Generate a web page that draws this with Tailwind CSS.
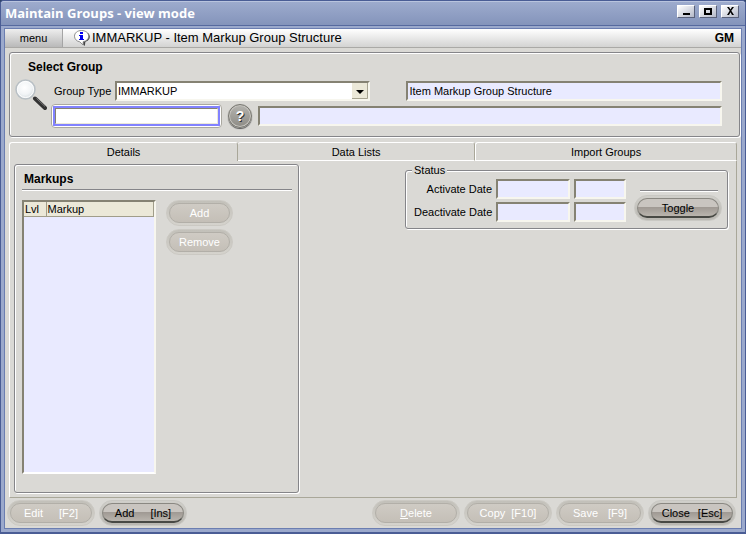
<!DOCTYPE html>
<html lang="en">

<head>
    <meta charset="UTF-8">
    <title>Maintain Groups - view mode</title>
    <meta name="viewport" content="width=device-width, initial-scale=1.0">
    <script src="https://cdn.jsdelivr.net/npm/@tailwindcss/browser@4"></script>
</head>

<body class="bg-[#2f4468] font-['Liberation_Sans',Arial,sans-serif] text-[11px] leading-[14px] text-black">
    <div class="min-h-screen flex flex-col rounded-t border border-b-2 border-[#4a5d95] bg-[#9ba9cc]">

        <!-- title bar -->
        <header class="flex items-center h-[25px] px-1 pb-0.5 rounded-t-[3px] border-t border-[#b9c4de] border-b border-b-[#566a9f] bg-linear-to-b from-[#9dabcd] to-[#8494bb]">
            <h1 class="flex-1 font-['Open_Sans',sans-serif] font-bold text-[13px] leading-4 text-white">Maintain Groups - view mode</h1>
            <div class="flex gap-1 pr-0.5 pb-0.5">
                <button aria-label="Minimize" class="w-[18px] h-[13px] border border-t-white border-l-white border-r-[#59617a] border-b-[#59617a] bg-linear-to-br from-white to-[#b4b9c9]">
                    <svg class="w-4 h-[11px]" viewBox="0 0 16 11"><path d="M5 7h7v2H5z" /></svg>
                </button>
                <button aria-label="Maximize" class="w-[18px] h-[13px] border border-t-white border-l-white border-r-[#59617a] border-b-[#59617a] bg-linear-to-br from-white to-[#b4b9c9]">
                    <svg class="w-4 h-[11px]" viewBox="0 0 16 11"><path fill-rule="evenodd" d="M4 2h8v7H4zM6 4v3h4V4z" /></svg>
                </button>
                <button aria-label="Close" class="w-[18px] h-[13px] border border-t-white border-l-white border-r-[#59617a] border-b-[#59617a] bg-linear-to-br from-white to-[#b4b9c9]">
                    <svg class="w-4 h-[11px]" viewBox="0 0 16 11"><path d="M5 1h2l1.500 2.500L10 1h2L9.300 4.800 12 9h-2L8.500 6.200 7 9H5l2.700-4.200z" /></svg>
                </button>
            </div>
        </header>

        <div class="flex-1 flex flex-col m-[3px] mt-0.5 border border-[#6b7eb1] bg-[#dad9d5]">

            <!-- menu bar -->
            <nav class="flex items-stretch h-[19px] border-b border-[#aaa9a6] bg-linear-to-b from-white to-[#d3d3d2]">
                <button class="w-[58px] border-r border-[#a5a5a5] bg-linear-to-b from-[#eeeeee] to-[#b9b9b9]">menu</button>
                <div class="flex-1 flex items-center pl-[11px] pr-[7px]">
                    <svg class="w-4 h-4 shrink-0" viewBox="0 0 16 16">
                        <path d="M10 1.500c3.700.5 5.800 2.600 5.800 5.200 0 2.300-1.600 4.200-4.400 5L10.800 16 7 12.500z" fill="#444" />
                        <path d="M7.500.5C3.400.5.5 2.900.5 6.200c0 2.800 2 5 5.200 5.600L9.200 15v-3.300c3.200-.5 5.500-2.700 5.500-5.500C14.700 2.900 11.600.5 7.500.5z" fill="#fff" stroke="#777" stroke-width=".8" />
                        <path d="M6 2h3v2H6zM5 5h4v4h1v1H5V9h1V6H5z" fill="#00e" />
                    </svg>
                    <span class="flex-1 pl-0.5 text-[13px] leading-4">IMMARKUP - Item Markup Group Structure</span>
                    <span class="font-bold text-xs">GM</span>
                </div>
            </nav>

            <main class="flex-1 flex flex-col pl-1 pr-px pt-1">

                <!-- group selection -->
                <section class="h-[85px] pt-[7px] pl-[5px] pr-[17px] rounded-[3px] border border-[#858589] shadow-[1px_1px_0_#fff,inset_1px_1px_0_#fff]">
                    <h2 class="pl-[13px] font-bold text-xs leading-[14px]">Select Group</h2>
                    <div class="flex mt-[7px]">
                        <svg class="w-8 h-8 shrink-0 -mt-0.5" viewBox="0 0 32 32">
                            <defs>
                                <radialGradient id="lens" cx=".45" cy=".4" r=".6">
                                    <stop offset="0" stop-color="#fff" />
                                    <stop offset=".6" stop-color="#f1f4f6" />
                                    <stop offset="1" stop-color="#d3dade" />
                                </radialGradient>
                            </defs>
                            <path d="M20 19.500 30 29" stroke="#333" stroke-width="4" stroke-linecap="round" />
                            <path d="M21.500 19.500 30 27.500" stroke="#777" stroke-width="1" />
                            <circle cx="10.500" cy="10.500" r="9.500" fill="url(#lens)" stroke="#b9c0c5" stroke-width="1.500" />
                            <circle cx="10.500" cy="10.500" r="8" fill="none" stroke="#fff" />
                        </svg>
                        <div class="flex-1 pl-[5px]">
                            <div class="flex items-center h-5 gap-9">
                                <div class="flex-[321] flex items-center pl-0.5">
                                    <label for="type" class="w-[61px]">Group Type</label>
                                    <div class="relative flex-1">
                                        <select id="type" class="block w-full h-5 appearance-none border-2 border-t-[#858273] border-l-[#858273] border-r-[#f7f6ee] border-b-[#f7f6ee] bg-white pl-px text-[11px] leading-4">
                                            <option>IMMARKUP</option>
                                        </select>
                                        <svg class="absolute right-0.5 top-0.5 w-4 h-4 pointer-events-none" viewBox="0 0 16 16">
                                            <path d="M0 0h16v16H0z" fill="#ebe8d8" />
                                            <path d="M15.500 0v15.500H0" fill="none" stroke="#a7a491" />
                                            <path d="M4 7h8l-4 4z" />
                                        </svg>
                                    </div>
                                </div>
                                <input aria-label="Group type description" value="Item Markup Group Structure" readonly class="flex-[314] min-w-0 h-5 border-2 border-t-[#858273] border-l-[#858273] border-r-[#f7f6ee] border-b-[#f7f6ee] bg-[#e9eaff] px-px leading-4">
                            </div>
                            <div class="flex items-center mt-[3px] gap-1.5">
                                <div class="w-[171px] -ml-px rounded-sm border border-[#aaa89f] p-px bg-white">
                                    <div class="border-2 border-[#8282ff]">
                                        <input aria-label="Group" class="block w-full h-4 border border-t-[#858273] border-l-[#858273] border-r-[#ebe8d8] border-b-[#ebe8d8] bg-white px-1">
                                    </div>
                                </div>
                                <button aria-label="Look up group" class="size-6 rounded-full border border-[#77766f] bg-linear-to-b from-[#b4b3ae] to-[#8e8c86] shadow-[inset_0_0_0_1px_#c6c4bf,0_1px_1px_#555] text-sm leading-4 font-bold text-white text-shadow-[1px_1px_0_#333]">?</button>
                                <input aria-label="Group description" readonly class="flex-1 min-w-0 h-5 border-2 border-t-[#858273] border-l-[#858273] border-r-[#f7f6ee] border-b-[#f7f6ee] bg-[#e9eaff]">
                            </div>
                        </div>
                    </div>
                </section>

                <!-- tabs -->
                <div class="flex h-[19px] mt-[5px] mr-[3px]" role="tablist">
                    <button role="tab" aria-selected="true" class="flex-[229] rounded-t-[3px] border-t border-l border-white border-r border-r-[#a9a799]">Details</button>
                    <button role="tab" class="flex-[238] rounded-t-[3px] border-y border-white border-r border-r-[#a9a799]">Data Lists</button>
                    <button role="tab" class="flex-[262] rounded-t-[3px] border-y border-l border-white border-r border-r-[#a9a799]">Import Groups</button>
                </div>

                <div class="flex-1 flex justify-between items-start mr-[3px] pt-[3px] pl-1 pb-1 pr-2 border-l border-white border-r border-r-[#a9a799] border-b border-b-[#a9a799]">

                    <!-- markup list -->
                    <section class="w-[285px] self-stretch flex flex-col pt-[7px] pl-[7px] pr-1.5 pb-[18px] rounded-[3px] border border-[#858589] shadow-[1px_1px_0_#fff,inset_1px_1px_0_#fff]">
                        <h2 class="pl-0.5 pb-[3px] font-bold text-xs leading-[14px] border-b border-[#858589] shadow-[0_1px_0_#fff]">Markups</h2>
                        <div class="flex-1 flex gap-2.5 mt-2.5">
                            <div class="w-[134px] border-2 border-t-[#858273] border-l-[#858273] border-r-[#f7f6ee] border-b-white bg-[#e9eaff]">
                                <table class="w-full">
                                    <thead class="bg-[#ebe8d8]">
                                        <tr>
                                            <th class="w-[22px] pl-px border-r border-b border-[#a09d8a] text-left font-normal">Lvl</th>
                                            <th class="pl-px border-r border-b border-[#a09d8a] text-left font-normal">Markup</th>
                                        </tr>
                                    </thead>
                                </table>
                            </div>
                            <div class="flex flex-col gap-[3px]">
                                <button disabled class="w-[67px] h-[26px] rounded-full border border-[#cbc9c3] p-0.5 bg-linear-to-b from-[#c2c0b9] to-[#d5d3cd] text-white">
                                    <span class="flex items-center justify-center h-full rounded-full border border-[#b2afa8] bg-linear-to-b from-[#cfcbc4] to-[#c4bfb7]">Add</span>
                                </button>
                                <button disabled class="w-[67px] h-[26px] rounded-full border border-[#cbc9c3] p-0.5 bg-linear-to-b from-[#c2c0b9] to-[#d5d3cd] text-white">
                                    <span class="flex items-center justify-center h-full rounded-full border border-[#b2afa8] bg-linear-to-b from-[#cfcbc4] to-[#c4bfb7]">Remove</span>
                                </button>
                            </div>
                        </div>
                    </section>

                    <!-- status dates -->
                    <fieldset class="w-[323px] h-[65px] pl-2 rounded-[3px] border border-[#858589] shadow-[1px_1px_0_#fff,inset_1px_1px_0_#fff]">
                        <legend class="px-0.5 -ml-0.5 bg-[#dad9d5] leading-3">Status</legend>
                        <div class="flex gap-2 pt-[3px]">
                            <div class="grid grid-cols-[78px_74px_52px] gap-x-1 gap-y-[3px] items-center">
                                <label for="activate" class="text-right">Activate Date</label>
                                <input id="activate" readonly class="min-w-0 h-5 border-2 border-t-[#858273] border-l-[#858273] border-r-[#f7f6ee] border-b-[#f7f6ee] bg-[#e9eaff]">
                                <input aria-label="Activate time" readonly class="min-w-0 h-5 border-2 border-t-[#858273] border-l-[#858273] border-r-[#f7f6ee] border-b-[#f7f6ee] bg-[#e9eaff]">
                                <label for="deactivate" class="text-right whitespace-nowrap">Deactivate Date</label>
                                <input id="deactivate" readonly class="min-w-0 h-5 border-2 border-t-[#858273] border-l-[#858273] border-r-[#f7f6ee] border-b-[#f7f6ee] bg-[#e9eaff]">
                                <input aria-label="Deactivate time" readonly class="min-w-0 h-5 border-2 border-t-[#858273] border-l-[#858273] border-r-[#f7f6ee] border-b-[#f7f6ee] bg-[#e9eaff]">
                            </div>
                            <div class="pt-[11px]">
                                <hr class="ml-1.5 mr-1 border-[#858589] shadow-[0_1px_0_#fff]">
                                <button class="mt-1 w-[88px] h-[26px] rounded-full border border-[#c9c8c3] p-0.5 bg-linear-to-b from-[#d0cfca] to-[#b9b7b1]">
                                    <span class="flex items-center justify-center h-full rounded-full border border-[#8a8882] border-b-2 border-b-[#484944] bg-linear-to-b from-[#c9c5c0] from-50% via-[#a09a94] via-50% to-[#bab5ae]">Toggle</span>
                                </button>
                            </div>
                        </div>
                    </fieldset>
                </div>

                <!-- actions -->
                <footer class="flex gap-1 -ml-0.5 mr-1 py-0.5">
                    <button disabled class="w-[88px] h-[26px] rounded-full border border-[#cbc9c3] p-0.5 bg-linear-to-b from-[#c2c0b9] to-[#d5d3cd] text-white">
                        <span class="flex items-center justify-center gap-4 h-full rounded-full border border-[#b2afa8] bg-linear-to-b from-[#cfcbc4] to-[#c4bfb7]"><span>Edit</span><span>[F2]</span></span>
                    </button>
                    <button class="w-[88px] h-[26px] rounded-full border border-[#c9c8c3] p-0.5 bg-linear-to-b from-[#d0cfca] to-[#b9b7b1]">
                        <span class="flex items-center justify-center gap-4 h-full rounded-full border border-[#8a8882] border-b-2 border-b-[#484944] bg-linear-to-b from-[#c9c5c0] from-50% via-[#a09a94] via-50% to-[#bab5ae]"><span>Add</span><span>[Ins]</span></span>
                    </button>
                    <button disabled class="ml-auto w-[88px] h-[26px] rounded-full border border-[#cbc9c3] p-0.5 bg-linear-to-b from-[#c2c0b9] to-[#d5d3cd] text-white">
                        <span class="flex items-center justify-center h-full rounded-full border border-[#b2afa8] bg-linear-to-b from-[#cfcbc4] to-[#c4bfb7]"><u>D</u>elete</span>
                    </button>
                    <button disabled class="w-[88px] h-[26px] rounded-full border border-[#cbc9c3] p-0.5 bg-linear-to-b from-[#c2c0b9] to-[#d5d3cd] text-white">
                        <span class="flex items-center justify-center gap-1.5 h-full rounded-full border border-[#b2afa8] bg-linear-to-b from-[#cfcbc4] to-[#c4bfb7]"><span>Copy</span><span>[F10]</span></span>
                    </button>
                    <button disabled class="w-[88px] h-[26px] rounded-full border border-[#cbc9c3] p-0.5 bg-linear-to-b from-[#c2c0b9] to-[#d5d3cd] text-white">
                        <span class="flex items-center justify-center gap-2.5 h-full rounded-full border border-[#b2afa8] bg-linear-to-b from-[#cfcbc4] to-[#c4bfb7]"><span>Save</span><span>[F9]</span></span>
                    </button>
                    <button class="w-[88px] h-[26px] rounded-full border border-[#c9c8c3] p-0.5 bg-linear-to-b from-[#d0cfca] to-[#b9b7b1]">
                        <span class="flex items-center justify-center gap-2 h-full rounded-full border border-[#8a8882] border-b-2 border-b-[#484944] bg-linear-to-b from-[#c9c5c0] from-50% via-[#a09a94] via-50% to-[#bab5ae]"><span>Close</span><span>[Esc]</span></span>
                    </button>
                </footer>
            </main>
        </div>
    </div>
</body>

</html>
